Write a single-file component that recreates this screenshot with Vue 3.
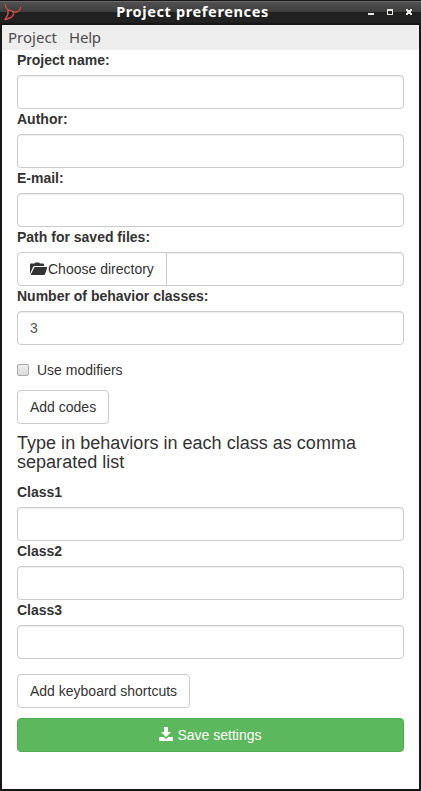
<script setup>
import { ref } from 'vue'

const details = ref([
  { id: 'name', label: 'Project name:', value: '' },
  { id: 'author', label: 'Author:', value: '' },
  { id: 'email', label: 'E-mail:', value: '' },
])
const directory = ref('')
const classCount = ref('3')
const useModifiers = ref(false)
const classes = ref(['', '', ''])
</script>

<template>
  <div class="window">
    <header class="titlebar">
      <svg class="logo" width="18" height="18" viewBox="0 0 18 18" fill="none" stroke-linecap="round">
        <path d="M1.200 0.500C1.600 3.500 2.500 5.200 4.200 6C6 6.500 7.500 6.300 8.800 7.500C11 8.600 15.800 8.500 16.500 3.500M4.200 6C3.200 8 5 9.500 3 12L1.200 15.500M8.800 7.500C10.500 10.500 9.500 13.500 1.200 15.500" stroke="#8a2c2a" stroke-width="1.800" />
        <path d="M1.200 0.500C1.600 3.500 2.500 5.200 4.200 6C6 6.500 7.500 6.300 8.800 7.500C11 8.600 15.800 8.500 16.500 3.500M4.200 6C3.200 8 5 9.500 3 12L1.200 15.500M8.800 7.500C10.500 10.500 9.500 13.500 1.200 15.500" stroke="#e0716c" stroke-width="0.800" />
      </svg>
      <div class="title">Project preferences</div>
      <svg class="controls" width="45" height="7" viewBox="0 0 45 7" shape-rendering="crispEdges">
        <path fill="#e6e6e3" d="M0 4h6v2H0zM19 0h6v6h-6zM38 0h2v1h2V0h2v2h-1v2h1v2h-2V5h-2v1h-2V4h1V2h-1z" />
        <path fill="#242424" d="M20 2h4v3h-4z" />
      </svg>
    </header>
    <nav class="menubar">
      <span>Project</span>
      <span class="help">Help</span>
    </nav>

    <main class="content">
      <div v-for="field in details" :key="field.id" class="field">
        <label :for="field.id">{{ field.label }}</label>
        <input :id="field.id" v-model="field.value" class="control" type="text" />
      </div>
      <div class="field">
        <label for="directory">Path for saved files:</label>
        <div class="input-group">
          <button class="btn addon" type="button">
            <svg class="folder" width="18" height="14" viewBox="0 0 18 14" fill="#333">
              <path d="M0 12V2.500Q0 1.500 1 1.500H4.500L5.500 0.500H9L10 1.500H13Q14 1.500 14 2.500V4H4.500Q3.500 4 3 5Z" />
              <path d="M4.500 5H16.800Q17.500 5 17.200 5.700L15 12.200Q14.800 13 14 13H0.600Z" />
            </svg>Choose directory
          </button>
          <input id="directory" v-model="directory" class="control" type="text" />
        </div>
      </div>
      <div class="field">
        <label for="count">Number of behavior classes:</label>
        <input id="count" v-model="classCount" class="control" type="text" />
      </div>

      <label class="checkbox">
        <input v-model="useModifiers" type="checkbox" />
        <span>Use modifiers</span>
      </label>
      <button class="btn" type="button">Add codes</button>

      <h4>Type in behaviors in each class as comma separated list</h4>

      <div v-for="(_, i) in classes" :key="i" class="field">
        <label :for="'class' + i">Class{{ i + 1 }}</label>
        <input :id="'class' + i" v-model="classes[i]" class="control" type="text" />
      </div>

      <button class="btn shortcuts" type="button">Add keyboard shortcuts</button>
      <button class="btn save" type="button">
        <svg class="download" width="14" height="14" viewBox="0 0 14 14" fill="#fff">
          <path d="M5 0H9V5H12L7 10L2 5H5Z" />
          <path d="M0 10H4.500L7 12L9.500 10H14V14H0Z" />
        </svg>
        <span>Save settings</span>
      </button>
    </main>
  </div>
</template>

<style>
body {
  margin: 0;
  overflow: hidden;
}
</style>

<style scoped>
* {
  box-sizing: border-box;
}
.window {
  display: flex;
  flex-direction: column;
  width: 421px;
  height: 791px;
  border: solid #171516;
  border-width: 0 2px 2px;
  background: #fff;
  color: #333;
  font: 14px/20px "Liberation Sans", Arial, sans-serif;
}
.titlebar {
  display: grid;
  grid-template-columns: 38px 1fr 70px;
  align-items: center;
  flex: none;
  height: 25px;
  margin: 0 -2px;
  padding: 0 8px 0 4px;
  background: linear-gradient(#171516 0 1px, #6b696a 1px 2px, #505050 2px, #3e3e3e 12px, #202020 12px, #222 22px, #151314 24px);
}
.logo {
  margin-top: 1px;
}
.title {
  margin-top: -2px;
  color: #fff;
  font: bold 14.5px/23px "Noto Sans", "Open Sans", sans-serif;
  letter-spacing: 0.63px;
  text-align: center;
  white-space: nowrap;
}
.controls {
  justify-self: end;
}
.menubar {
  display: flex;
  flex: none;
  gap: 12px;
  height: 25px;
  padding-left: 6px;
  background: #eee;
  color: #4c4c4c;
  font: 15px/25px "Noto Sans", "Open Sans", sans-serif;
}
.help {
  letter-spacing: -0.2px;
}
.content {
  display: flex;
  flex-direction: column;
  align-items: flex-start;
  padding: 0 15px;
}
.field {
  width: 100%;
}
.field label {
  display: block;
  margin-bottom: 5px;
  font-weight: bold;
}
.control {
  display: block;
  width: 100%;
  height: 34px;
  margin: 0;
  padding: 6px 12px;
  border: 1px solid #ccc;
  border-radius: 4px;
  outline: none;
  background: #fff;
  box-shadow: inset 0 1px 1px rgba(0, 0, 0, 0.075);
  color: #555;
  font: inherit;
}
.btn {
  flex: none;
  height: 34px;
  margin: 0;
  padding: 6px 12px;
  border: 1px solid #ccc;
  border-radius: 4px;
  background: #fff;
  color: #333;
  font: inherit;
  white-space: nowrap;
}
.input-group {
  display: flex;
}
.addon {
  display: flex;
  align-items: center;
  border-radius: 4px 0 0 4px;
}
.input-group .control {
  flex: 1;
  min-width: 0;
  margin-left: -1px;
  border-radius: 0 4px 4px 0;
}
.folder {
  margin-top: -1px;
}
.checkbox {
  display: flex;
  align-items: center;
  gap: 8px;
  height: 20px;
  margin: 15px 0 10px;
}
.checkbox input {
  appearance: none;
  width: 12px;
  height: 12px;
  margin: 0;
  border: 1px solid #aaa;
  border-radius: 2px;
  background: linear-gradient(#eee, #dcdcdc);
}
h4 {
  margin: 10px 0;
  font-size: 18px;
  font-weight: normal;
  line-height: 19px;
  letter-spacing: 0.02px;
}
.shortcuts {
  margin-top: 15px;
}
.save {
  display: flex;
  align-items: center;
  justify-content: center;
  gap: 4px;
  width: 100%;
  margin-top: 10px;
  border-color: #4cae4c;
  background: #5cb85c;
  color: #fff;
}
.download {
  margin-top: -2px;
}
</style>
